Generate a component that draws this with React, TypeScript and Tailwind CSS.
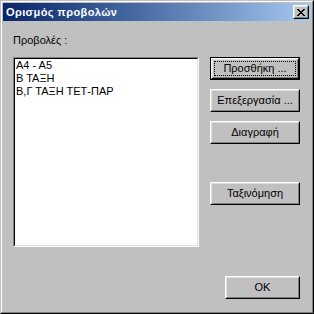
import React from "react";

function Btn({ label, w, def }: { label: string; w: string; def?: boolean }) {
  if (def) {
    return (
      <div className={`${w} h-[23px] border border-black`}>
        <div className="h-full border border-t-white border-l-white border-r-black border-b-black">
          <div className="h-full border border-t-[#dfdfdf] border-l-[#dfdfdf] border-r-[#808080] border-b-[#808080] p-px">
            <div className="h-full border border-dotted border-black flex items-center justify-center text-[11px] leading-[13px] text-black">
              {label}
            </div>
          </div>
        </div>
      </div>
    );
  }
  return (
    <div className={`${w} h-[23px] border border-t-white border-l-white border-r-black border-b-black`}>
      <div className="h-full border border-t-[#dfdfdf] border-l-[#dfdfdf] border-r-[#808080] border-b-[#808080] flex items-center justify-center text-[11px] leading-[13px] text-black">
        {label}
      </div>
    </div>
  );
}

export default function App() {
  return (
    <div className="w-[314px] h-[314px] bg-[#c0c0c0] border border-t-[#c0c0c0] border-l-[#c0c0c0] border-r-black border-b-black font-['Liberation_Sans',Arial,sans-serif]">
      <div className="h-full border border-t-white border-l-white border-r-[#808080] border-b-[#808080] p-px flex flex-col">
        <div className="h-[18px] flex items-center justify-between pl-[3px] pr-[2px] bg-gradient-to-r from-[#0a246a] to-[#a6caf0]">
          <span className="text-white font-bold text-[11px] leading-[13px] tracking-[0.4px]">Ορισμός προβολών</span>
          <div className="w-[16px] h-[14px] border border-t-white border-l-white border-r-black border-b-black">
            <div className="h-full border border-t-[#dfdfdf] border-l-[#dfdfdf] border-r-[#808080] border-b-[#808080] bg-[#c0c0c0] flex items-center justify-center">
              <svg width="8" height="7" viewBox="0 0 8 7" shapeRendering="crispEdges">
                <path
                  d="M0 0h2v1H0zM6 0h2v1H6zM1 1h2v1H1zM5 1h2v1H5zM2 2h4v1H2zM3 3h2v1H3zM2 4h4v1H2zM1 5h2v1H1zM5 5h2v1H5zM0 6h2v1H0zM6 6h2v1H6z"
                  fill="#000"
                />
              </svg>
            </div>
          </div>
        </div>
        <div className="flex-1 flex flex-col pl-[10px]">
          <div className="mt-[13px] text-[11px] leading-[13px] text-black">Προβολές :</div>
          <div className="mt-[10px] flex">
            <div className="w-[186px] h-[190px] border border-t-[#808080] border-l-[#808080] border-r-white border-b-white">
              <div className="h-full border border-t-black border-l-black border-r-[#dfdfdf] border-b-[#dfdfdf] bg-white pl-[1px] text-[11px] leading-[13px] text-black">
                <div>A4 - A5</div>
                <div>Β ΤΑΞΗ</div>
                <div>Β,Γ ΤΑΞΗ ΤΕΤ-ΠΑΡ</div>
              </div>
            </div>
            <div className="ml-[11px] flex flex-col">
              <Btn label="Προσθήκη ..." w="w-[90px]" def />
              <div className="mt-[9px]"><Btn label="Επεξεργασία ..." w="w-[90px]" /></div>
              <div className="mt-[9px]"><Btn label="Διαγραφή" w="w-[90px]" /></div>
              <div className="mt-[38px]"><Btn label="Ταξινόμηση" w="w-[90px]" /></div>
            </div>
          </div>
          <div className="mt-[29px] flex pl-[212px]">
            <Btn label="OK" w="w-[75px]" />
          </div>
        </div>
      </div>
    </div>
  );
}
